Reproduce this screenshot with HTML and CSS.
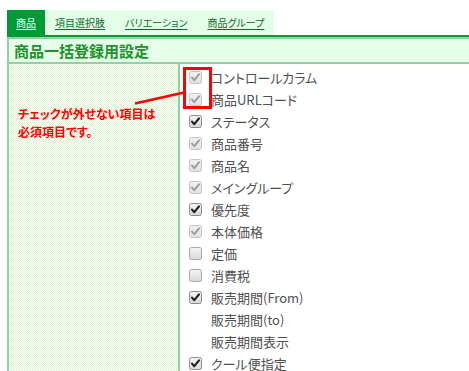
FILE: index.html
```html
<!DOCTYPE html>
<html lang="ja">
<head>
<meta charset="utf-8">
<title>商品一括登録用設定</title>
<link rel="stylesheet" href="styles.css">
</head>
<body>
<svg class="defs" width="0" height="0" aria-hidden="true">
  <defs>
    <linearGradient id="gBox" x1="0" y1="0" x2="0" y2="1">
      <stop offset="0" stop-color="#f4f4f4"/>
      <stop offset="1" stop-color="#d9d9d9"/>
    </linearGradient>
    <linearGradient id="gDis" x1="0" y1="0" x2="0" y2="1">
      <stop offset="0" stop-color="#f0f0f0"/>
      <stop offset="1" stop-color="#e2e2e2"/>
    </linearGradient>
    <symbol id="cb-on" viewBox="0 0 13 13">
      <rect x="0.5" y="0.5" width="12" height="12" rx="2" fill="url(#gBox)" stroke="#8c8c8c"/>
      <path d="M3 6.6 L5.3 9.2 L10 3.4" fill="none" stroke="#1e1e1e" stroke-width="2.1" stroke-linecap="round" stroke-linejoin="round"/>
    </symbol>
    <symbol id="cb-dis" viewBox="0 0 13 13">
      <rect x="0.5" y="0.5" width="12" height="12" rx="2" fill="url(#gDis)" stroke="#c4c4c4"/>
      <path d="M3 6.6 L5.3 9.2 L10 3.4" fill="none" stroke="#9e9e9e" stroke-width="2" stroke-linecap="round" stroke-linejoin="round"/>
    </symbol>
    <symbol id="cb-off" viewBox="0 0 13 13">
      <rect x="0.5" y="0.5" width="12" height="12" rx="2" fill="url(#gBox)" stroke="#a6a6a6"/>
    </symbol>
  </defs>
</svg>
<div class="page">
  <nav class="tabs">
    <a class="tab active" href="#">商品</a>
    <a class="tab" href="#">項目選択肢</a>
    <a class="tab" href="#">バリエーション</a>
    <a class="tab" href="#">商品グループ</a>
  </nav>
  <section class="panel">
    <h2 class="title">商品一括登録用設定</h2>
    <div class="grid">
      <div class="note">
        <p>チェックが外せない項目は<br>必須項目です。</p>
      </div>
      <ul class="fields">
        <li><svg class="cb"><use href="#cb-dis"/></svg><span>コントロールカラム</span></li>
        <li><svg class="cb"><use href="#cb-dis"/></svg><span>商品URLコード</span></li>
        <li><svg class="cb"><use href="#cb-on"/></svg><span>ステータス</span></li>
        <li><svg class="cb"><use href="#cb-dis"/></svg><span>商品番号</span></li>
        <li><svg class="cb"><use href="#cb-dis"/></svg><span>商品名</span></li>
        <li><svg class="cb"><use href="#cb-dis"/></svg><span>メイングループ</span></li>
        <li><svg class="cb"><use href="#cb-on"/></svg><span>優先度</span></li>
        <li><svg class="cb"><use href="#cb-dis"/></svg><span>本体価格</span></li>
        <li><svg class="cb"><use href="#cb-off"/></svg><span>定価</span></li>
        <li><svg class="cb"><use href="#cb-off"/></svg><span>消費税</span></li>
        <li><svg class="cb"><use href="#cb-on"/></svg><span>販売期間(From)</span></li>
        <li><span class="cb"></span><span>販売期間(to)</span></li>
        <li><span class="cb"></span><span>販売期間表示</span></li>
        <li><svg class="cb"><use href="#cb-on"/></svg><span>クール便指定</span></li>
      </ul>
    </div>
  </section>
  <div class="callout-box"></div>
  <svg class="callout-line" width="200" height="120" viewBox="0 0 200 120" aria-hidden="true">
    <line x1="128" y1="93.5" x2="177" y2="82.5" stroke="#ff0000" stroke-width="2.4"/>
  </svg>
</div>
</body>
</html>
```

FILE: styles.css
```css
html, body {
  margin: 0;
  padding: 0;
  overflow: hidden;
  background: #ffffff;
}

body {
  font-family: "Noto Sans CJK JP", "Noto Sans", sans-serif;
  font-feature-settings: "palt";
}

.defs {
  position: absolute;
  width: 0;
  height: 0;
}

.page {
  position: relative;
  margin: 10px 0 0 7px;
  width: 480px;
}

.tabs {
  display: inline-flex;
  background: #e4fde6;
  height: 25px;
  vertical-align: top;
}

.tab {
  display: flex;
  align-items: center;
  padding: 0 10px;
  font-size: 10px;
  line-height: 1;
  color: #0b6b2a;
  text-decoration: underline;
  text-underline-offset: 2px;
}

.tab.active {
  background: #009a36;
  color: #ffffff;
  padding: 0 9px 0 9px;
}

.panel {
  border-top: 2px solid #009a36;
}

.title {
  margin: 0;
  height: 23px;
  line-height: 23px;
  padding-left: 5px;
  background: #e5ffe8;
  border-top: 2px solid #8fd3a3;
  border-bottom: 2px solid #8fd3a3;
  border-left: 2px solid #8fd3a3;
  font-size: 15px;
  font-weight: bold;
  color: #22902e;
  letter-spacing: 0;
}

.grid {
  display: grid;
  grid-template-columns: 171px 1fr;
  border-left: 2px solid #8fd3a3;
  min-height: 320px;
}

.note {
  border-right: 2px solid #8fd3a3;
  background:
    conic-gradient(#dcf1cd 25%, #ffffff 0 50%, #dcf1cd 0 75%, #ffffff 0) 0 0 / 2px 2px;
  padding: 41px 0 0 9px;
}

.note p {
  margin: 0;
  font-size: 12px;
  line-height: 18px;
  font-weight: bold;
  color: #ff0000;
}

.fields {
  list-style: none;
  margin: 0;
  padding: 2px 0 0 9px;
}

.fields li {
  display: flex;
  align-items: center;
  gap: 9px;
  height: 22px;
  font-size: 13px;
  color: #505050;
}

.cb {
  width: 13px;
  height: 13px;
  flex: none;
  display: block;
}

.callout-box {
  position: absolute;
  left: 176px;
  top: 57px;
  width: 23px;
  height: 36px;
  border: 3px solid #ff0000;
}

.callout-line {
  position: absolute;
  left: 0;
  top: 0;
  pointer-events: none;
}
```
